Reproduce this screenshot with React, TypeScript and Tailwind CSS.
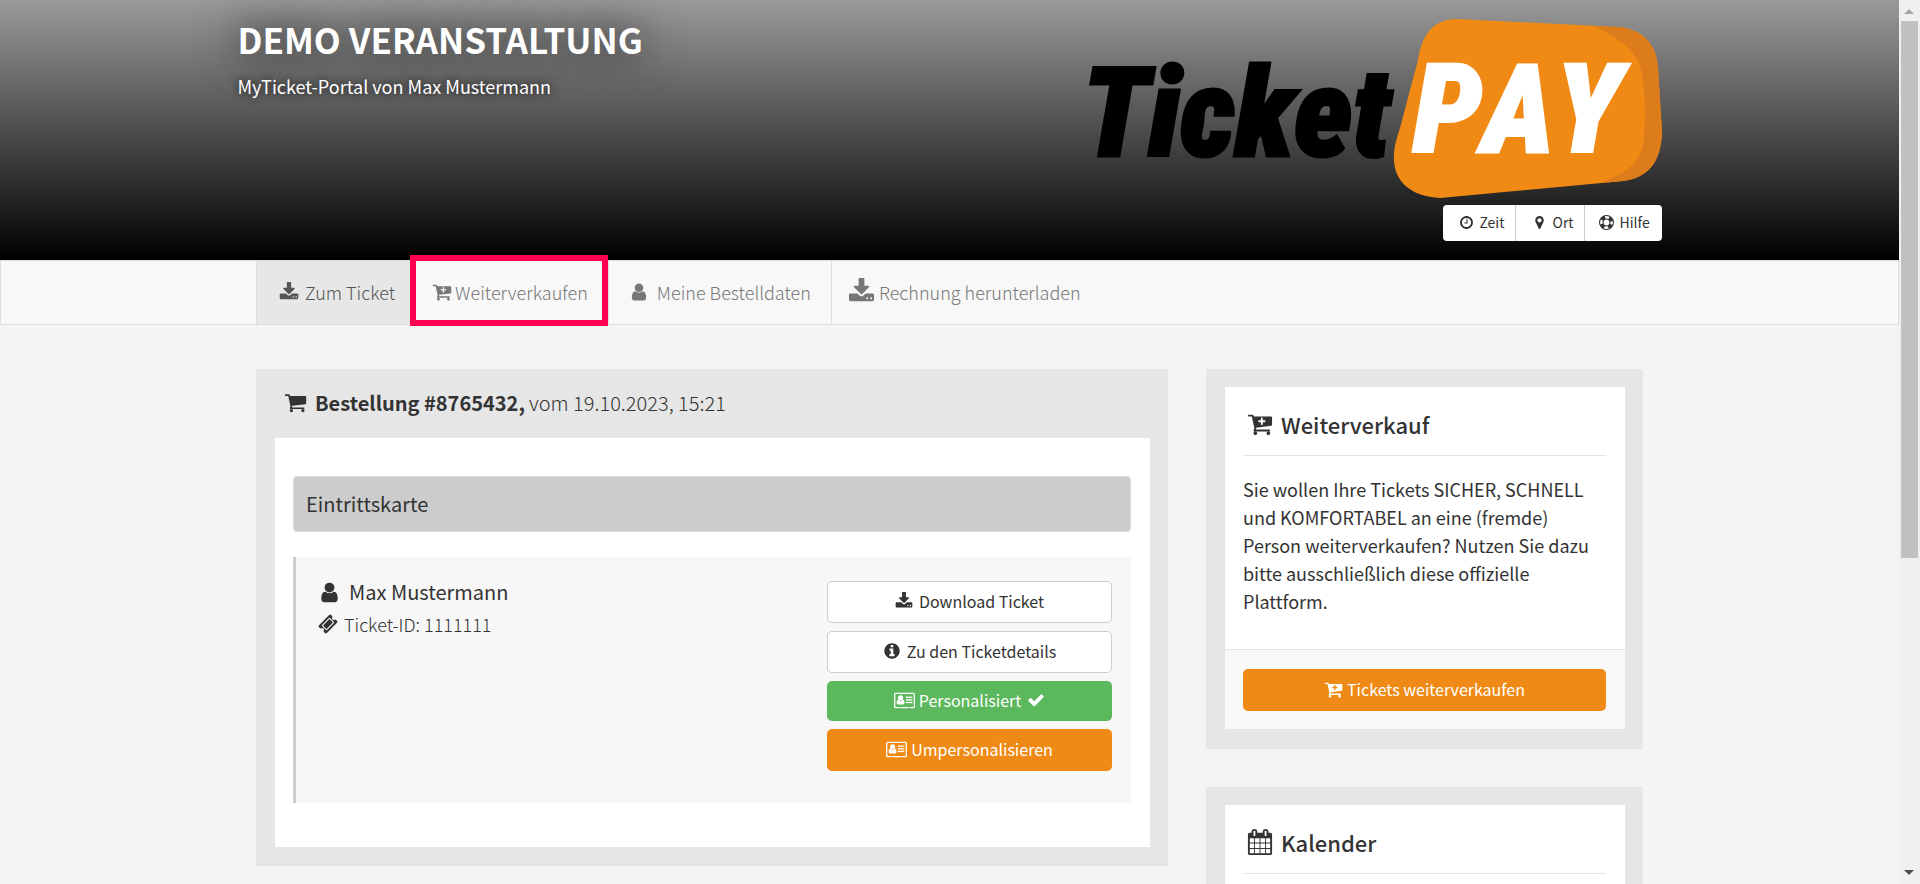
import type { ReactNode } from 'react'
import { clsx } from 'clsx'

const CART =
  'M704 1536q0 52-38 90t-90 38-90-38-38-90 38-90 90-38 90 38 38 90zm896 0q0 52-38 90t-90 38-90-38-38-90 38-90 90-38 90 38 38 90zm128-1088v512q0 24-16.5 42.5t-40.5 21.5l-1044 122q13 60 13 70 0 16-24 64h920q26 0 45 19t19 45-19 45-45 19h-1024q-26 0-45-19t-19-45q0-11 8-31.5t16-36 21.5-40 15.5-29.5l-177-823h-204q-26 0-45-19t-19-45 19-45 45-19h256q16 0 28.5 6.5t19.5 15.5 13 24.5 8 26 5.5 29.5 4.5 26h1201q26 0 45 19t19 45z'

const ICONS = {
  user: 'M1536 1399q0 109-62.5 187t-150.5 78h-854q-88 0-150.5-78t-62.5-187q0-85 8.5-160.5t31.5-152 58.5-131 94-89 134.5-34.5q131 128 313 128t313-128q76 0 134.5 34.5t94 89 58.5 131 31.5 152 8.5 160.5zm-256-887q0 159-112.5 271.5t-271.5 112.5-271.5-112.5-112.5-271.5 112.5-271.5 271.5-112.5 271.5 112.5 112.5 271.5z',
  download:
    'M1344 1344q0-26-19-45t-45-19-45 19-19 45 19 45 45 19 45-19 19-45zm256 0q0-26-19-45t-45-19-45 19-19 45 19 45 45 19 45-19 19-45zm128-224v320q0 40-28 68t-68 28h-1472q-40 0-68-28t-28-68v-320q0-40 28-68t68-28h465l135 136q58 56 136 56t136-56l136-136h464q40 0 68 28t28 68zm-325-569q17 41-14 70l-448 448q-18 19-45 19t-45-19l-448-448q-31-29-14-70 17-39 59-39h256v-448q0-26 19-45t45-19h256q26 0 45 19t19 45v448h256q42 0 59 39z',
  cart: CART,
  cartPlus:
    CART +
    'M1280 704q0-26-19-45t-45-19h-128v-128q0-26-19-45t-45-19-45 19-19 45v128h-128q-26 0-45 19t-19 45 19 45 45 19h128v128q0 26 19 45t45 19 45-19 19-45v-128h128q26 0 45-19t19-45z',
  info: 'M1152 1376v-160q0-14-9-23t-23-9h-96v-512q0-14-9-23t-23-9h-320q-14 0-23 9t-9 23v160q0 14 9 23t23 9h96v320h-96q-14 0-23 9t-9 23v160q0 14 9 23t23 9h448q14 0 23-9t9-23zm-128-896v-160q0-14-9-23t-23-9h-192q-14 0-23 9t-9 23v160q0 14 9 23t23 9h192q14 0 23-9t9-23zm640 416q0 209-103 385.5t-279.5 279.5-385.5 103-385.5-103-279.5-279.5-103-385.5 103-385.5 279.5-279.5 385.5-103 385.5 103 279.5 279.5 103 385.5z',
  check:
    'M1671 566q0 40-28 68l-724 724-136 136q-28 28-68 28t-68-28l-136-136-362-362q-28-28-28-68t28-68l136-136q28-28 68-28t68 28l294 295 656-657q28-28 68-28t68 28l136 136q28 28 28 68z',
  clock:
    'M1024 544v448q0 14-9 23t-23 9h-320q-14 0-23-9t-9-23v-64q0-14 9-23t23-9h224v-352q0-14 9-23t23-9h64q14 0 23 9t9 23zm416 352q0-148-73-273t-198-198-273-73-273 73-198 198-73 273 73 273 198 198 273 73 273-73 198-198 73-273zm224 0q0 209-103 385.5t-279.5 279.5-385.5 103-385.5-103-279.5-279.5-103-385.5 103-385.5 279.5-279.5 385.5-103 385.5 103 279.5 279.5 103 385.5z',
  marker:
    'M1152 640q0-106-75-181t-181-75-181 75-75 181 75 181 181 75 181-75 75-181zm256 0q0 109-33 179l-364 774q-16 33-47.5 52t-67.5 19-67.5-19-46.5-52l-365-774q-33-70-33-179 0-212 150-362t362-150 362 150 150 362z',
  ticket:
    'M1024 452l316 316-572 572-316-316zm-211 979l618-618q19-19 19-45t-19-45l-362-362q-18-18-45-18t-45 18l-618 618q-19 19-19 45t19 45l362 362q18 18 45 18t45-18zm889-637l-907 908q-37 37-90.5 37t-90.5-37l-126-126q56-56 56-136t-56-136-136-56-136 56l-125-126q-37-37-37-90.5t37-90.5l907-906q37-37 90.5-37t90.5 37l125 125q-56 56-56 136t56 136 136 56 136-56l126 125q37 37 37 90.5t-37 90.5z',
  calendar:
    'M192 1664h288v-288h-288v288zm352 0h320v-288h-320v288zm-352-352h288v-320h-288v320zm352 0h320v-320h-320v320zm-352-384h288v-288h-288v288zm736 736h320v-288h-320v288zm-384-736h320v-288h-320v288zm768 736h288v-288h-288v288zm-384-352h320v-320h-320v320zm-352-864v-288q0-13-9.5-22.5t-22.5-9.5h-64q-13 0-22.5 9.5t-9.5 22.5v288q0 13 9.5 22.5t22.5 9.5h64q13 0 22.5-9.5t9.5-22.5zm736 864h288v-320h-288v320zm-384-384h320v-288h-320v288zm384 0h288v-288h-288v288zm32-480v-288q0-13-9.5-22.5t-22.5-9.5h-64q-13 0-22.5 9.5t-9.5 22.5v288q0 13 9.5 22.5t22.5 9.5h64q13 0 22.5-9.5t9.5-22.5zm384-64v1280q0 52-38 90t-90 38h-1408q-52 0-90-38t-38-90v-1280q0-52 38-90t90-38h128v-96q0-66 47-113t113-47h64q66 0 113 47t47 113v96h384v-96q0-66 47-113t113-47h64q66 0 113 47t47 113v96h128q52 0 90 38t38 90z',
}

function Icon({ name, className }: { name: keyof typeof ICONS; className?: string }) {
  return (
    <svg viewBox="0 0 1792 1792" fill="currentColor" fillRule="evenodd" aria-hidden="true" className={clsx('shrink-0', className)}>
      <path d={ICONS[name]} />
    </svg>
  )
}

function LifeRing({ className }: { className?: string }) {
  return (
    <svg viewBox="0 0 28 28" fill="none" stroke="currentColor" aria-hidden="true" className={clsx('shrink-0', className)}>
      <circle cx="14" cy="14" r="13" strokeWidth="2" />
      <circle cx="14" cy="14" r="6.5" strokeWidth="2" />
      <circle cx="14" cy="14" r="9.5" strokeWidth="7" strokeDasharray="7.5 7.42" strokeDashoffset="-3.7" />
    </svg>
  )
}

function AddressCard({ className }: { className?: string }) {
  return (
    <svg viewBox="0 0 32 26" fill="currentColor" aria-hidden="true" className={clsx('shrink-0', className)}>
      <path
        fillRule="evenodd"
        d="M2.5 1h27A2.5 2.5 0 0 1 32 3.500v19a2.500 2.500 0 0 1-2.500 2.500H25v-1h-3v1H10v-1H7v1H2.500A2.500 2.500 0 0 1 0 22.500v-19A2.500 2.500 0 0 1 2.500 1zM2.500 3a.5.5 0 0 0-.5.5v19c0 .3.200.500.500.500h27a.5.5 0 0 0 .5-.5v-19a.5.5 0 0 0-.5-.5z"
      />
      <circle cx="10" cy="9" r="4" />
      <path d="M6.500 12c1 1.300 2.200 2 3.500 2s2.500-.7 3.500-2c2 .3 2.500 2.500 2.500 4.500 0 1.500-.8 2.500-2 2.500H6c-1.200 0-2-1-2-2.500 0-2 .5-4.200 2.500-4.500z" />
      <rect x="18" y="7" width="10" height="2" />
      <rect x="18" y="11" width="10" height="2" />
      <rect x="18" y="15" width="10" height="2" />
    </svg>
  )
}

function Logo() {
  return (
    <svg viewBox="-30 0 604 184" role="img" aria-label="TicketPAY" className="h-[184px] w-[604px]">
      <path
        fill="#f18a14"
        d="M369 3L530 11C556 13 569 30 570 52L574 116C573 146 560 162 535 165L352 182C322 181 304 164 306 138Q306 130 312 112L330 44C334 20 344 3 369 3z"
      />
      <path fill="#dd7c1a" d="M506 10L530 11C556 13 569 30 570 52L574 116C573 146 560 162 535 165L514 167C540 155 554 146 556 122L557 100Q557 66 551 47C545 32 526 20 506 10z" />
      <g
        fontFamily="'Roboto Condensed', Roboto, sans-serif"
        fontWeight="900"
        fontStyle="italic"
        fontSize="124"
        style={{ fontKerning: 'none' }}
      >
        <text x="-6" y="140" fill="#000" stroke="#000" strokeWidth="3">
          Ticket
        </text>
        <text x="325" y="136" fill="#fff" stroke="#fff" strokeWidth="2">
          PAY
        </text>
      </g>
    </svg>
  )
}

function HeaderButton({ children, className }: { children: ReactNode; className?: string }) {
  return (
    <button
      type="button"
      className={clsx('flex h-9 items-center border-[#ccc] bg-white px-3 pb-[2px] text-sm text-[#333]', className)}
    >
      {children}
    </button>
  )
}

function NavItem({ children, active, className }: { children: ReactNode; active?: boolean; className?: string }) {
  return (
    <li className={clsx('relative flex border-r border-[#ddd]', active && 'bg-[#e7e7e7] text-[#555]', className)}>
      <a href="#" className="flex items-center pb-[2px] font-light">
        {children}
      </a>
    </li>
  )
}

const TONES = {
  plain: 'h-[42px] border border-[#ccc] bg-white text-[#333]',
  green: 'h-10 bg-[#5cb85c] text-white',
  orange: 'h-[42px] bg-[#f08a16] text-white',
}

function ActionButton({ tone, children }: { tone: keyof typeof TONES; children: ReactNode }) {
  return (
    <button type="button" className={clsx('flex w-full items-center justify-center rounded-[5px] pb-[2px] text-base', TONES[tone])}>
      {children}
    </button>
  )
}

function SideCard({ icon, title, children }: { icon: keyof typeof ICONS; title: string; children?: ReactNode }) {
  return (
    <section className="bg-[#e6e6e6] pt-[18px] pr-[18px] pb-5 pl-[19px]">
      <div className="bg-white pt-5">
        <h2 className="mr-[19px] ml-[18px] flex h-[49px] items-center border-b border-[#e5e5e5] pb-[14px] pl-1 text-[22px] font-medium">
          <Icon name={icon} className="mr-2 size-[26px]" />
          {title}
        </h2>
        {children}
      </div>
    </section>
  )
}

function Scrollbar() {
  return (
    <div aria-hidden="true" className="flex w-[21px] shrink-0 flex-col items-center bg-[#f0f0f0]">
      <svg viewBox="0 0 21 21" className="size-[21px]">
        <path d="M5 14h10l-5-5z" fill="#a3a3a3" />
      </svg>
      <div className="h-[537px] w-[17px] bg-[#c1c1c1]" />
      <svg viewBox="0 0 21 21" className="mt-auto size-[21px]">
        <path d="M5 7h10l-5 5z" fill="#505050" />
      </svg>
    </div>
  )
}

export default function App() {
  return (
    <div className="flex h-screen bg-[#f4f4f4] font-['Noto_Sans_CJK_SC',sans-serif] text-[#333]">
      <div className="min-w-0 flex-1 overflow-hidden">
        <header className="h-[260px] bg-[linear-gradient(#999,#000)]">
          <div className="mx-auto flex max-w-[1424px] justify-between">
            <div className="pt-[19px] text-white">
              <h1 className="text-[35px] leading-10 font-bold uppercase [text-shadow:0_0_40px_#000]">Demo Veranstaltung</h1>
              <p className="mt-[11px] text-lg leading-8 [text-shadow:0_0_10px_#000]">MyTicket-Portal von Max Mustermann</p>
            </div>
            <div className="flex flex-col items-end gap-[5px] pt-4">
              <Logo />
              <div className="flex overflow-hidden rounded-[4px]">
                <HeaderButton className="w-[73px] border-r">
                  <Icon name="clock" className="mr-[6px] ml-1 size-[15px]" />
                  Zeit
                </HeaderButton>
                <HeaderButton className="w-[69px] border-r">
                  <Icon name="marker" className="mr-[6px] ml-1 size-[15px]" />
                  Ort
                </HeaderButton>
                <HeaderButton className="w-[77px]">
                  <LifeRing className="mr-[6px] ml-[2px] size-[15px]" />
                  Hilfe
                </HeaderButton>
              </div>
            </div>
          </div>
        </header>

        <nav className="border border-[#ddd] bg-[#f8f8f8]">
          <ul className="mx-auto flex h-[63px] max-w-[1387px] border-l border-[#ddd] text-lg text-[#777]">
            <NavItem active className="pr-4 pl-[22px]">
              <Icon name="download" className="mr-[6px] size-5" />
              Zum Ticket
            </NavItem>
            <NavItem className="px-5">
              <Icon name="cartPlus" className="mr-[3px] size-5" />
              Weiterverkaufen
              <span className="pointer-events-none absolute -top-[6px] right-0 -bottom-[2px] -left-[2px] border-6 border-[#ff0050]" />
            </NavItem>
            <NavItem className="px-5">
              <Icon name="user" className="mr-2 size-5" />
              Meine Bestelldaten
            </NavItem>
            <NavItem className="border-r-0 px-4">
              <Icon name="download" className="mr-1 size-[27px]" />
              Rechnung herunterladen
            </NavItem>
          </ul>
        </nav>

        <main className="mx-auto mt-11 flex max-w-[1387px] items-start gap-[38px]">
          <section className="min-w-0 flex-1 bg-[#e6e6e6] pr-[18px] pb-[19px] pl-[19px]">
            <h2 className="flex h-[69px] items-center pb-[2px] pl-[9px] text-xl">
              <Icon name="cart" className="mr-2 size-[23px]" />
              <strong className="mr-1 font-bold">Bestellung #8765432,</strong>
              <span className="font-light">vom 19.10.2023, 15:21</span>
            </h2>
            <div className="bg-white pt-[38px] pr-[19px] pb-11 pl-[18px]">
              <h3 className="flex h-14 items-center rounded-[4px] border border-[#dcdcdc] bg-[#ccc] px-3 text-xl">
                Eintrittskarte
              </h3>
              <div className="mt-[25px] flex min-h-[246px] justify-between border-l-3 border-[#ccc] bg-[#f7f7f7] py-6 pr-[19px] pl-5">
                <div className="-mt-px">
                  <p className="flex h-6 items-center text-xl">
                    <Icon name="user" className="mr-2 ml-[2px] size-[23px]" />
                    Max Mustermann
                  </p>
                  <p className="mt-2 flex h-6 items-center text-lg font-light">
                    <Icon name="ticket" className="mr-[6px] ml-[2px] size-5" />
                    Ticket-ID: 1111111
                  </p>
                </div>
                <div className="flex w-[285px] flex-col gap-2">
                  <ActionButton tone="plain">
                    <Icon name="download" className="mr-[6px] size-[18px]" />
                    Download Ticket
                  </ActionButton>
                  <ActionButton tone="plain">
                    <Icon name="info" className="mr-[6px] size-[18px]" />
                    Zu den Ticketdetails
                  </ActionButton>
                  <ActionButton tone="green">
                    <AddressCard className="mr-1 h-[17px] w-[21px]" />
                    Personalisiert
                    <Icon name="check" className="ml-[6px] size-[18px]" />
                  </ActionButton>
                  <ActionButton tone="orange">
                    <AddressCard className="mr-1 h-[17px] w-[21px]" />
                    Umpersonalisieren
                  </ActionButton>
                </div>
              </div>
            </div>
          </section>

          <aside className="flex w-[437px] shrink-0 flex-col gap-[38px]">
            <SideCard icon="cartPlus" title="Weiterverkauf">
              <p className="px-[18px] pt-[19px] pb-[34px] text-lg leading-7">
                Sie wollen Ihre Tickets SICHER, SCHNELL und KOMFORTABEL an eine (fremde) Person weiterverkaufen? Nutzen
                Sie dazu bitte ausschließlich diese offizielle Plattform.
              </p>
              <div className="border-t border-[#e5e5e5] bg-[#f9f9f9] pt-[19px] pr-[19px] pb-[18px] pl-[18px]">
                <ActionButton tone="orange">
                  <Icon name="cartPlus" className="mr-1 size-[19px]" />
                  Tickets weiterverkaufen
                </ActionButton>
              </div>
            </SideCard>
            <SideCard icon="calendar" title="Kalender">
              <div className="h-40" />
            </SideCard>
          </aside>
        </main>
      </div>
      <Scrollbar />
    </div>
  )
}
